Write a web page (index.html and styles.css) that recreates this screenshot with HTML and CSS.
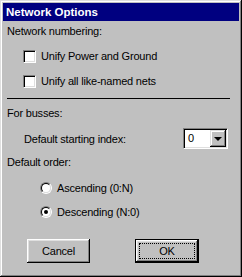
FILE: index.html
```html
<!DOCTYPE html>
<html lang="en">
<head>
<meta charset="UTF-8">
<title>Network Options</title>
<link rel="stylesheet" href="styles.css">
</head>
<body>

<div class="dialog">
  <div class="titlebar">Network Options</div>
  <div class="content">
    <div class="label">Network numbering:</div>
    <div class="check first"><span class="box"></span>Unify Power and Ground</div>
    <div class="check"><span class="box"></span>Unify all like-named nets</div>
    <div class="rule"></div>
    <div class="label busses">For busses:</div>
    <div class="index-row">
      <span>Default starting index:</span>
      <div class="combo">
        <span class="combo-value">0</span>
        <span class="combo-btn"><span class="arrow"></span></span>
      </div>
    </div>
    <div class="label order">Default order:</div>
    <div class="radio first"><span class="dot"></span>Ascending (0:N)</div>
    <div class="radio checked"><span class="dot"></span>Descending (N:0)</div>
    <div class="buttons">
      <div class="btn">Cancel</div>
      <div class="btn default"><span class="focus">OK</span></div>
    </div>
  </div>
</div>

</body>
</html>
```

FILE: styles.css
```css
body {
  margin: 0;
  padding: 0;
  font-family: 'Liberation Sans', Arial, sans-serif;
  font-size: 11px;
  letter-spacing: -0.2px;
  color: #000;
  background: #c0c0c0;
}
.dialog {
  width: 242px;
  height: 277px;
  box-sizing: border-box;
  padding: 3px;
  background: #c0c0c0;
  box-shadow: inset -1px -1px #000, inset 1px 1px #dfdfdf, inset -2px -2px #808080, inset 2px 2px #fff;
}
.titlebar {
  height: 18px;
  line-height: 18px;
  background: #000080;
  color: #fff;
  font-weight: bold;
  font-size: 11.5px;
  letter-spacing: 0;
  padding-left: 3px;
}
.content {
  padding: 0 4px;
}
.label {
  line-height: 13px;
  margin-top: 4px;
}
/* checkboxes */
.check {
  display: flex;
  align-items: center;
  height: 13px;
  line-height: 13px;
  margin-top: 12px;
  margin-left: 16px;
}
.check.first {
  margin-top: 12px;
}
.box {
  width: 13px;
  height: 13px;
  box-sizing: border-box;
  background: #fff;
  border: 1px solid;
  border-color: #808080 #fff #fff #808080;
  box-shadow: inset 1px 1px #000, inset -1px -1px #dfdfdf;
  margin-right: 5px;
}
.rule {
  width: 223px;
  height: 1px;
  background: #000;
  margin-top: 10px;
}
.label.busses {
  margin-top: 8px;
}
/* combo */
.index-row {
  display: flex;
  align-items: center;
  justify-content: space-between;
  margin-top: 8px;
  margin-left: 17px;
  margin-right: 7px;
}
.combo {
  width: 45px;
  height: 21px;
  box-sizing: border-box;
  background: #fff;
  border: 1px solid;
  border-color: #808080 #fff #fff #808080;
  box-shadow: inset 1px 1px #000, inset -1px -1px #dfdfdf;
  padding: 1px;
  display: flex;
}
.combo-value {
  flex: 1;
  line-height: 17px;
  padding-left: 3px;
}
.combo-btn {
  width: 16px;
  height: 17px;
  box-sizing: border-box;
  background: #c0c0c0;
  box-shadow: inset -1px -1px #000, inset 1px 1px #dfdfdf, inset -2px -2px #808080, inset 2px 2px #fff;
  display: flex;
  align-items: center;
  justify-content: center;
}
.arrow {
  width: 0;
  height: 0;
  border-left: 4px solid transparent;
  border-right: 4px solid transparent;
  border-top: 4px solid #000;
  margin-top: 1px;
}
.label.order {
  margin-top: 7px;
}
/* radios */
.radio {
  display: flex;
  align-items: center;
  height: 12px;
  line-height: 12px;
  margin-top: 12px;
  margin-left: 33px;
}
.radio.first {
  margin-top: 13px;
}
.dot {
  width: 12px;
  height: 12px;
  box-sizing: border-box;
  border-radius: 50%;
  border: 1px solid;
  border-color: #808080 #fff #fff #808080;
  margin-right: 5px;
  position: relative;
}
.dot::before {
  content: "";
  display: block;
  width: 10px;
  height: 10px;
  box-sizing: border-box;
  border-radius: 50%;
  border: 1px solid;
  border-color: #000 #dfdfdf #dfdfdf #000;
  background: #fff;
}
.radio.checked .dot::after {
  content: "";
  position: absolute;
  left: 3px;
  top: 3px;
  width: 4px;
  height: 4px;
  border-radius: 50%;
  background: #000;
}
/* buttons */
.buttons {
  display: flex;
  margin-top: 21px;
  margin-left: 20px;
  gap: 45px;
}
.btn {
  width: 63px;
  height: 24px;
  box-sizing: border-box;
  background: #c0c0c0;
  box-shadow: inset -1px -1px #000, inset 1px 1px #fff, inset -2px -2px #808080, inset 2px 2px #dfdfdf;
  display: flex;
  align-items: center;
  justify-content: center;
}
.btn.default {
  width: 64px;
  border: 1px solid #000;
  padding: 3px;
}
.focus {
  flex: 1;
  align-self: stretch;
  border: 1px dotted #000;
  display: flex;
  align-items: center;
  justify-content: center;
}
```
